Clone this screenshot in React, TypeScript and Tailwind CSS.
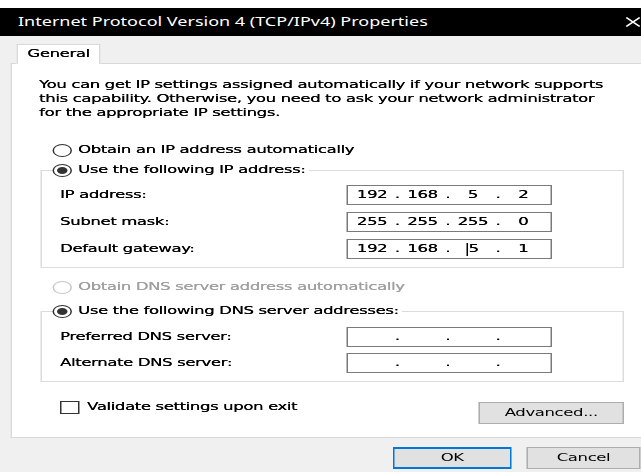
import { Fragment } from "react";

type RadioProps = { checked?: boolean; disabled?: boolean };

function Radio({ checked, disabled }: RadioProps) {
  return (
    <span
      className={
        "flex h-[13px] w-[13px] shrink-0 items-center justify-center rounded-full border bg-white " +
        (disabled ? "border-[#c6c6c6]" : "border-[#333333]")
      }
    >
      {checked && <span className="h-[7px] w-[7px] rounded-full bg-[#333333]" />}
    </span>
  );
}

function IpBox({ parts, caretAt }: { parts: string[]; caretAt?: number }) {
  return (
    <div className="flex h-[20px] w-[137px] items-center border border-[#7a7a7a] bg-white pl-[3px]">
      {parts.map((p, i) => (
        <Fragment key={i}>
          <span className="flex w-[26px] items-center justify-center">
            {caretAt === i && <span className="h-[13px] w-px bg-black" />}
            {p}
          </span>
          {i < 3 && <span className="w-[7.6px] text-center">.</span>}
        </Fragment>
      ))}
    </div>
  );
}

function FieldRow({ label, children }: { label: string; children: React.ReactNode }) {
  return (
    <div className="flex h-[20px] items-center">
      <span className="w-[203px] pl-[12px]">{label}</span>
      {children}
    </div>
  );
}

function GroupLegend({ text }: { text: string }) {
  return (
    <legend className="ml-[7px] flex h-[20px] items-center gap-[4px] p-0 pr-[2px]">
      <Radio checked />
      <span>{text}</span>
    </legend>
  );
}

export default function App() {
  return (
    <div className="h-[472px] w-[641px] overflow-hidden bg-[#f0f0f0]">
      <div className="flex h-[472px] w-[428px] origin-top-left scale-x-150 flex-col font-['DejaVu_Sans',sans-serif] text-[11px] tracking-[-0.25px] text-black [text-shadow:0.2px_0_currentColor]">
        <div className="h-[8px] bg-white" />
        {/* title bar */}
        <div className="flex h-[28px] items-center bg-black pl-[12px] pr-[1px] font-['Noto_Sans',sans-serif] text-[12px] tracking-normal text-white [text-shadow:none]">
          <span>Internet Protocol Version 4 (TCP/IPv4) Properties</span>
          <svg className="ml-auto shrink-0" width="10" height="10" viewBox="0 0 10 10" fill="none">
            <path d="M0.5 0.5L9.5 9.5M9.5 0.5L0.5 9.5" stroke="#ffffff" strokeWidth="1.3" />
          </svg>
        </div>

        <div className="flex flex-1 flex-col pt-[8px]">
          {/* tab strip */}
          <div className="relative z-10 -mb-px ml-[11px] flex h-[20px] w-[56px] items-center justify-center border border-b-0 border-[#d9d9d9] bg-white">
            General
          </div>

          {/* tab page */}
          <div className="ml-[7px] flex h-[375px] w-[421px] flex-col border border-r-0 border-[#d9d9d9] bg-white">
            <p className="ml-[18px] mt-[14px] whitespace-nowrap leading-[14px]">
              You can get IP settings assigned automatically if your network supports
              <br />
              this capability. Otherwise, you need to ask your network administrator
              <br />
              for the appropriate IP settings.
            </p>

            <div className="mt-[20px] flex h-[20px] items-center gap-[4px] pl-[27px]">
              <Radio />
              <span>Obtain an IP address automatically</span>
            </div>

            <fieldset className="m-0 ml-[19px] flex w-[389px] min-w-0 flex-col border border-[#dcdcdc] p-0 pb-[8px]">
              <GroupLegend text="Use the following IP address:" />
              <div className="mt-[5px] flex flex-col gap-[7px]">
                <FieldRow label="IP address:">
                  <IpBox parts={["192", "168", "5", "2"]} />
                </FieldRow>
                <FieldRow label="Subnet mask:">
                  <IpBox parts={["255", "255", "255", "0"]} />
                </FieldRow>
                <FieldRow label="Default gateway:">
                  <IpBox parts={["192", "168", "5", "1"]} caretAt={2} />
                </FieldRow>
              </div>
            </fieldset>

            <div className="mt-[9px] flex h-[20px] items-center gap-[4px] pl-[27px] text-[#a0a0a0]">
              <Radio disabled />
              <span>Obtain DNS server address automatically</span>
            </div>

            <fieldset className="m-0 ml-[19px] mt-[4px] flex w-[389px] min-w-0 flex-col border border-[#dcdcdc] p-0 pb-[8px]">
              <GroupLegend text="Use the following DNS server addresses:" />
              <div className="mt-[6px] flex flex-col gap-[6px]">
                <FieldRow label="Preferred DNS server:">
                  <IpBox parts={["", "", "", ""]} />
                </FieldRow>
                <FieldRow label="Alternate DNS server:">
                  <IpBox parts={["", "", "", ""]} />
                </FieldRow>
              </div>
            </fieldset>

            <div className="ml-[19px] mt-[15px] flex w-[389px] items-start">
              <div className="flex h-[20px] items-center gap-[5px] pl-[13px]">
                <span className="h-[13px] w-[13px] border border-[#333333] bg-white" />
                <span>Validate settings upon exit</span>
              </div>
              <button className="ml-auto mt-[5px] flex h-[22px] w-[97px] items-center justify-center border border-[#adadad] bg-[#e1e1e1]">
                Advanced...
              </button>
            </div>
          </div>

          {/* dialog buttons */}
          <div className="mt-[9px] flex gap-[10px] pl-[262px]">
            <button className="flex h-[22px] w-[79px] items-center justify-center border-x border-y-2 border-[#0078d7] bg-[#e1e1e1]">
              OK
            </button>
            <button className="flex h-[22px] w-[76px] items-center justify-center border border-[#adadad] bg-[#e1e1e1]">
              Cancel
            </button>
          </div>
        </div>
      </div>
    </div>
  );
}
